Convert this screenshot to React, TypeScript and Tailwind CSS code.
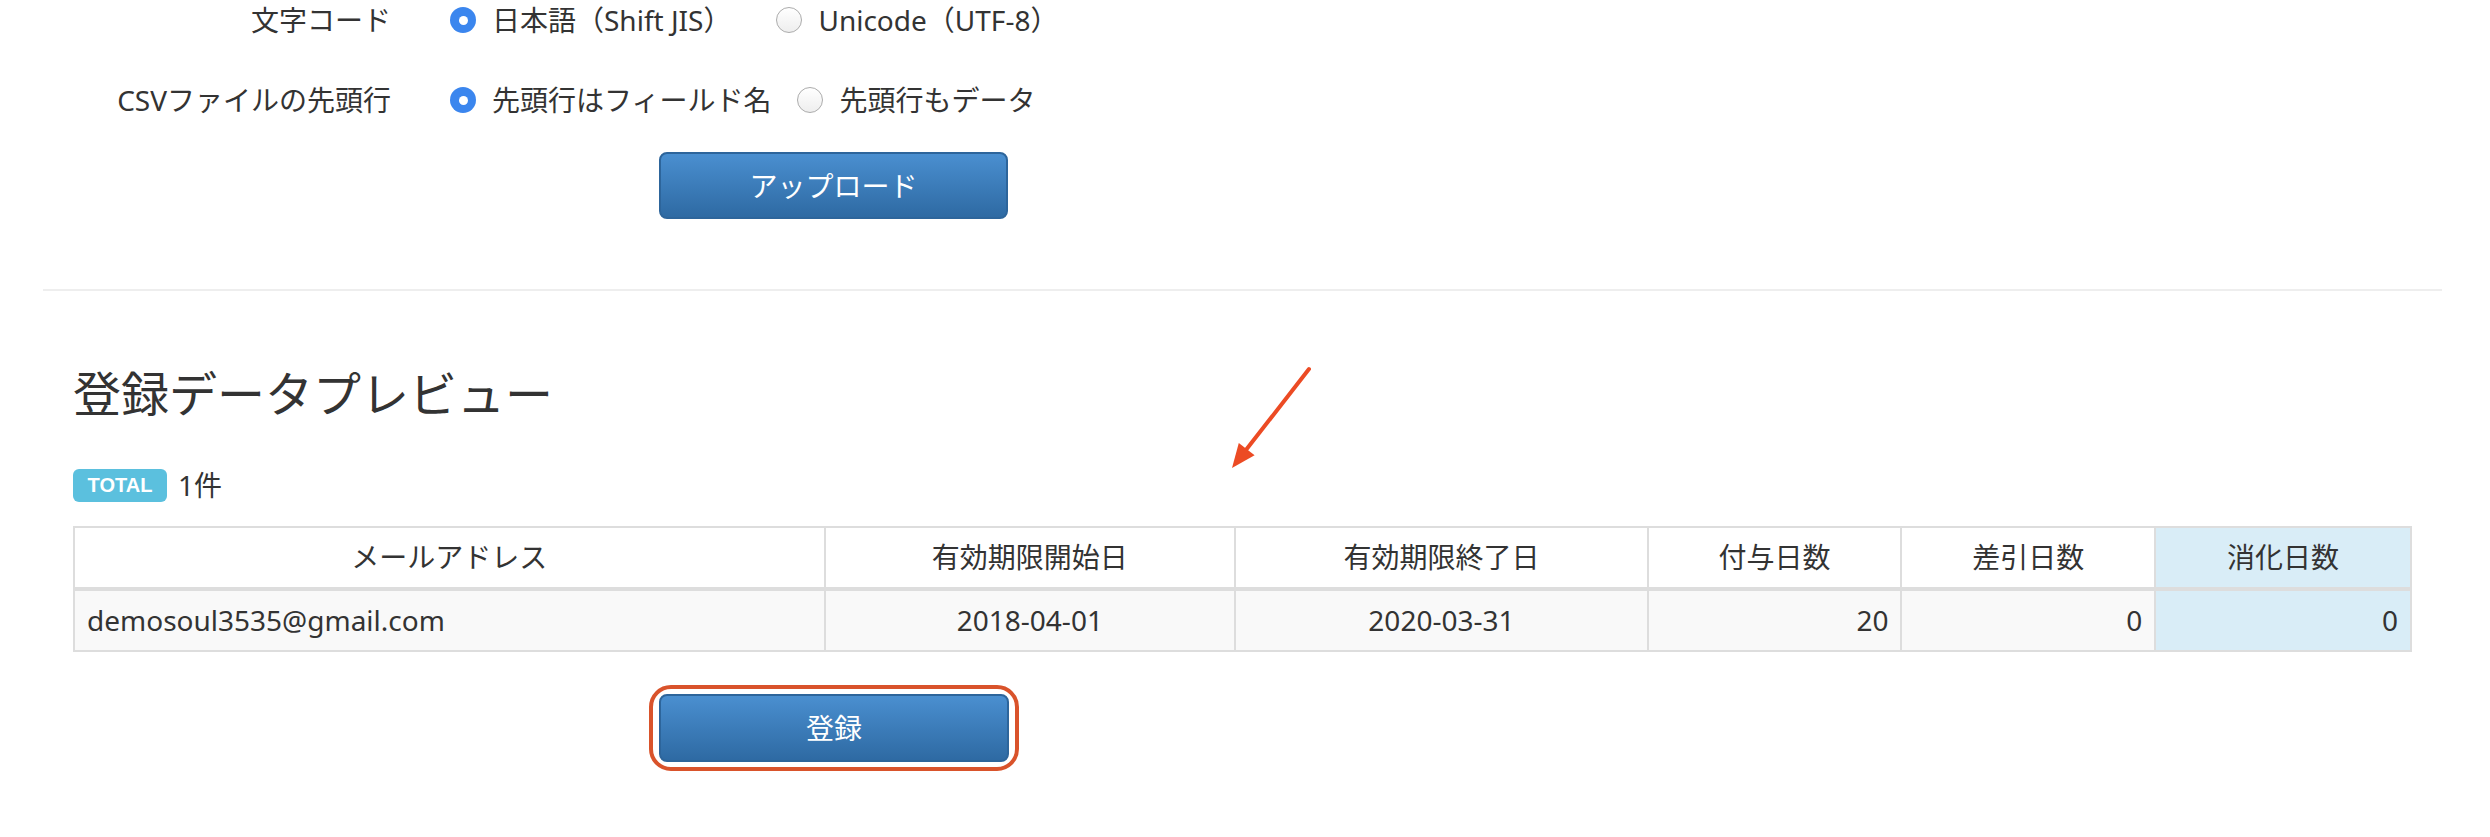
import React from "react";

const columns = [
  { label: "メールアドレス", width: "w-[751px]" },
  { label: "有効期限開始日", width: "w-[411px]" },
  { label: "有効期限終了日", width: "w-[413px]" },
  { label: "付与日数", width: "w-[254px]" },
  { label: "差引日数", width: "w-[254px]" },
  { label: "消化日数", width: "w-[256px]" },
];

function Radio({ checked }: { checked: boolean }) {
  if (checked) {
    return (
      <span className="flex h-[26px] w-[26px] shrink-0 items-center justify-center rounded-full bg-[#3b86ee]">
        <span className="h-[9px] w-[9px] rounded-full bg-white" />
      </span>
    );
  }
  return (
    <span className="h-[26px] w-[26px] shrink-0 rounded-full border border-[#acacac] bg-gradient-to-b from-white to-[#eeeeee]" />
  );
}

function FormRow({
  label,
  gap,
  options,
}: {
  label: string;
  gap: string;
  options: { text: string; checked: boolean }[];
}) {
  return (
    <div className="flex h-10 items-center">
      <div className="w-[391px] text-right">{label}</div>
      <div className="ml-[59px] flex items-center">
        {options.map((opt, i) => (
          <label key={opt.text} className={"flex items-center " + (i > 0 ? gap : "")}>
            <Radio checked={opt.checked} />
            <span className="ml-4">{opt.text}</span>
          </label>
        ))}
      </div>
    </div>
  );
}

export default function App() {
  return (
    <div className="relative min-h-[837px] overflow-hidden bg-white font-['Noto_Sans','Noto_Sans_CJK_JP',sans-serif] text-[28px] text-[#333]">
      {/* Upload form */}
      <FormRow
        label="文字コード"
        gap="ml-[45px]"
        options={[
          { text: "日本語（Shift JIS）", checked: true },
          { text: "Unicode（UTF-8）", checked: false },
        ]}
      />
      <div className="mt-10">
        <FormRow
          label="CSVファイルの先頭行"
          gap="ml-[26px]"
          options={[
            { text: "先頭行はフィールド名", checked: true },
            { text: "先頭行もデータ", checked: false },
          ]}
        />
      </div>
      <button className="ml-[659px] mt-8 flex h-[67px] w-[349px] items-center justify-center rounded-lg border-2 border-[#2d659b] bg-gradient-to-b from-[#4a8fd0] to-[#2e6aa3] text-white">
        アップロード
      </button>

      <div className="ml-[43px] mt-[70px] w-[2399px] border-t-2 border-[#eeeeee]" />

      {/* Preview */}
      <div className="pl-[73px]">
        <h2 className="mt-[77px] text-[48px] leading-[1.1] font-normal">登録データプレビュー</h2>

        <div className="mt-[48px] flex h-[33px] items-center">
          <span className="flex h-[33px] w-[94px] items-center justify-center rounded-md bg-[#5bc0de] font-['Liberation_Sans',sans-serif] text-[20px] font-bold text-white">
            TOTAL
          </span>
          <span className="ml-[11px]">1件</span>
        </div>

        <table className="mt-6 w-[2339px] border-collapse border-2 border-[#dddddd]">
          <thead>
            <tr>
              {columns.map((col, i) => (
                <th
                  key={col.label}
                  className={
                    col.width +
                    " h-[62px] border-2 border-b-4 border-[#dddddd] text-center font-normal " +
                    (i === 5 ? "bg-[#d9edf7]" : "bg-white")
                  }
                >
                  {col.label}
                </th>
              ))}
            </tr>
          </thead>
          <tbody>
            <tr className="bg-[#f9f9f9]">
              <td className="h-[62px] border-2 border-[#dddddd] px-3">demosoul3535@gmail.com</td>
              <td className="border-2 border-[#dddddd] text-center">2018-04-01</td>
              <td className="border-2 border-[#dddddd] text-center">2020-03-31</td>
              <td className="border-2 border-[#dddddd] px-3 text-right">20</td>
              <td className="border-2 border-[#dddddd] px-3 text-right">0</td>
              <td className="border-2 border-[#dddddd] bg-[#d9edf7] px-3 text-right">0</td>
            </tr>
          </tbody>
        </table>

        <div className="ml-[576px] mt-[33px] w-[370px] rounded-[22px] border-4 border-[#d9532b] px-[6px] py-[5px]">
          <button className="flex h-[68px] w-full items-center justify-center rounded-lg border-2 border-[#2d659b] bg-gradient-to-b from-[#4a8fd0] to-[#2e6aa3] text-white">
            登録
          </button>
        </div>
      </div>

      {/* annotation arrow */}
      <svg className="absolute left-[1225px] top-[360px]" width="95" height="115" viewBox="0 0 95 115">
        <line x1="84" y1="9" x2="21.7" y2="89.1" stroke="#ec4b24" strokeWidth="4" strokeLinecap="round" />
        <polygon points="7,108 29.6,95.2 13.8,83" fill="#ec4b24" />
      </svg>
    </div>
  );
}
